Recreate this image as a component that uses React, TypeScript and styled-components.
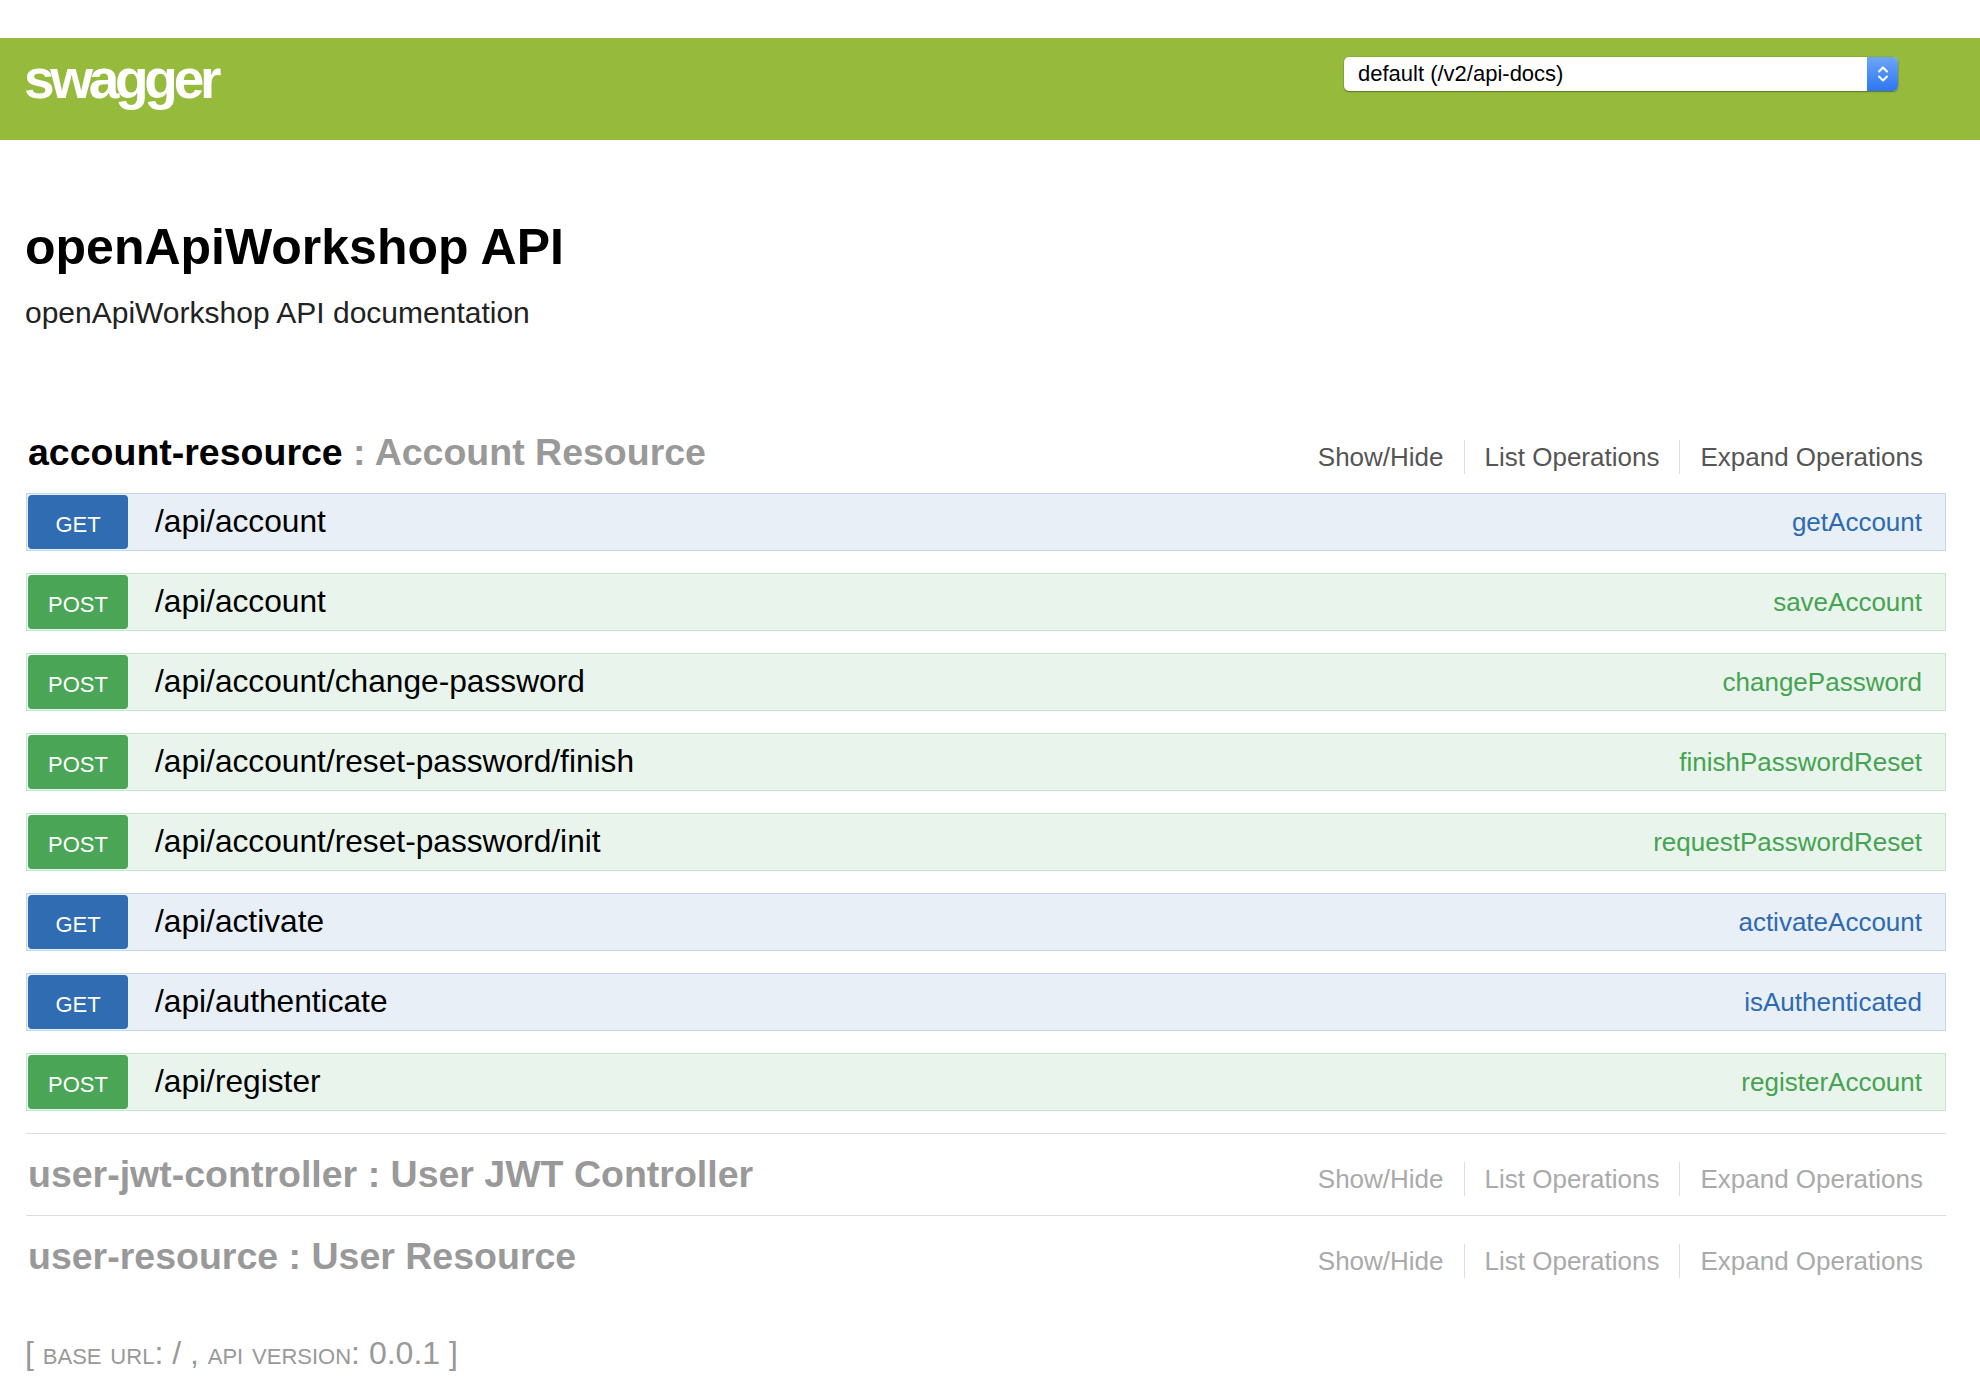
import React from 'react';
import styled, { createGlobalStyle, css } from 'styled-components';

type Method = 'get' | 'post';

type Operation = {
  method: Method;
  path: string;
  nickname: string;
};

type Resource = {
  name: string;
  description: string;
  active?: boolean;
  operations: Operation[];
};

const methodColors = {
  get: { badge: '#2f6cb1', bg: '#e8eff7', border: '#c4d7ea', text: '#2d6ab1' },
  post: { badge: '#4aa556', bg: '#e9f4ec', border: '#c7e6d1', text: '#45a351' },
};

const GlobalStyle = createGlobalStyle`
  html, body {
    margin: 0;
    padding: 0;
    background: #fff;
  }
  body {
    font-family: "Liberation Sans", Arial, Helvetica, sans-serif;
    color: #000;
  }
  ul {
    list-style: none;
    margin: 0;
    padding: 0;
  }
`;

const Page = styled.div`
  padding-top: 38px;
  padding-bottom: 30px;
`;

const Header = styled.header`
  display: flex;
  justify-content: space-between;
  align-items: flex-start;
  height: 102px;
  box-sizing: border-box;
  padding: 14px 82px 0 24px;
  background: #96bb3c;
`;

const Logo = styled.a`
  font-size: 55px;
  line-height: 1;
  font-weight: bold;
  letter-spacing: -4.3px;
  color: #fff;
  text-decoration: none;
`;

const ApiSelect = styled.div`
  display: flex;
  align-items: stretch;
  width: 554px;
  height: 34px;
  margin-top: 5px;
  background: #fff;
  border-radius: 5px;
  box-shadow: 0 1px 1.5px rgba(0, 0, 0, 0.35), 0 0 0 0.5px rgba(0, 0, 0, 0.12);
  overflow: hidden;
`;

const SelectText = styled.span`
  flex: 1;
  display: flex;
  align-items: center;
  padding-left: 14px;
  font-size: 22px;
  color: #000;
`;

const Stepper = styled.span`
  width: 31px;
  display: flex;
  align-items: center;
  justify-content: center;
  background: linear-gradient(#6ea5f6, #2d77f1);
`;

const Container = styled.main`
  padding: 0 34px 0 25px;
`;

const InfoTitle = styled.h1`
  margin: 82px 0 0;
  font-size: 50px;
  line-height: 1;
  font-weight: bold;
`;

const InfoDescription = styled.div`
  margin-top: 26px;
  font-size: 30px;
  line-height: 1;
  color: #222;
`;

const ResourceList = styled.ul`
  margin-top: 84px !important;
  padding-left: 1px !important;
`;

const ResourceItem = styled.li<{ $last?: boolean }>`
  border-bottom: ${(p) => (p.$last ? 'none' : '1px solid #ddd')};
`;

const ResourceHeading = styled.div`
  display: flex;
  justify-content: space-between;
  align-items: flex-end;
  padding: 22px 0;
`;

const ResourceName = styled.h2<{ $active?: boolean }>`
  margin: 0;
  padding-left: 2px;
  font-size: 37.5px;
  line-height: 37px;
  font-weight: bold;
  color: ${(p) => (p.$active ? '#000' : '#999')};
`;

const ResourceDesc = styled.span`
  color: #999;
`;

const Options = styled.ul`
  display: flex;
  margin-right: 23px !important;
`;

const OptionItem = styled.li`
  padding: 4px 20px 0;
  margin-bottom: -3px;
  border-right: 1px solid #ddd;

  &:first-child {
    padding-left: 0;
  }
  &:last-child {
    padding-right: 0;
    border-right: none;
  }
`;

const OptionLink = styled.a<{ $active?: boolean }>`
  display: block;
  padding-bottom: 4px;
  font-size: 26px;
  line-height: 1;
  text-decoration: none;
  color: ${(p) => (p.$active ? '#555' : '#aaa')};
`;

const OperationList = styled.ul``;

const OperationRow = styled.li<{ $method: Method }>`
  display: flex;
  align-items: center;
  height: 58px;
  box-sizing: border-box;
  margin-bottom: 22px;
  padding: 1px;
  ${(p) => css`
    background: ${methodColors[p.$method].bg};
    border: 1px solid ${methodColors[p.$method].border};
  `}
`;

const MethodBadge = styled.span<{ $method: Method }>`
  display: flex;
  align-items: center;
  justify-content: center;
  width: 100px;
  height: 54px;
  box-sizing: border-box;
  padding-top: 6px;
  border-radius: 4px;
  font-size: 22px;
  color: #fff;
  text-transform: uppercase;
  background: ${(p) => methodColors[p.$method].badge};
`;

const PathText = styled.span`
  flex: 1;
  padding-left: 27px;
  font-size: 31.7px;
  line-height: 1;
  color: #000;
`;

const OperationName = styled.span<{ $method: Method }>`
  padding-right: 22px;
  font-size: 26px;
  line-height: 1;
  color: ${(p) => methodColors[p.$method].text};
`;

const Footer = styled.h4`
  margin: 40px 0 0;
  font-size: 32px;
  line-height: 1;
  font-weight: normal;
  color: #999;
`;

const SmallCaps = styled.span`
  font-variant: small-caps;
`;

const resources: Resource[] = [
  {
    name: 'account-resource',
    description: 'Account Resource',
    active: true,
    operations: [
      { method: 'get', path: '/api/account', nickname: 'getAccount' },
      { method: 'post', path: '/api/account', nickname: 'saveAccount' },
      { method: 'post', path: '/api/account/change-password', nickname: 'changePassword' },
      { method: 'post', path: '/api/account/reset-password/finish', nickname: 'finishPasswordReset' },
      { method: 'post', path: '/api/account/reset-password/init', nickname: 'requestPasswordReset' },
      { method: 'get', path: '/api/activate', nickname: 'activateAccount' },
      { method: 'get', path: '/api/authenticate', nickname: 'isAuthenticated' },
      { method: 'post', path: '/api/register', nickname: 'registerAccount' },
    ],
  },
  { name: 'user-jwt-controller', description: 'User JWT Controller', operations: [] },
  { name: 'user-resource', description: 'User Resource', operations: [] },
];

const StepperIcon = () => (
  <svg width="14" height="22" viewBox="0 0 14 22" fill="none">
    <path d="M3 8.5 L7 4.5 L11 8.5" stroke="#fff" strokeWidth="2" strokeLinecap="round" strokeLinejoin="round" />
    <path d="M3 13.5 L7 17.5 L11 13.5" stroke="#fff" strokeWidth="2" strokeLinecap="round" strokeLinejoin="round" />
  </svg>
);

const App: React.FC = () => {
  return (
    <Page>
      <GlobalStyle />
      <Header>
        <Logo href="#">swagger</Logo>
        <ApiSelect>
          <SelectText>default (/v2/api-docs)</SelectText>
          <Stepper>
            <StepperIcon />
          </Stepper>
        </ApiSelect>
      </Header>
      <Container>
        <InfoTitle>openApiWorkshop API</InfoTitle>
        <InfoDescription>openApiWorkshop API documentation</InfoDescription>
        <ResourceList>
          {resources.map((res, index) => (
            <ResourceItem key={res.name} $last={index === resources.length - 1}>
              <ResourceHeading>
                <ResourceName $active={res.active}>
                  {res.name} <ResourceDesc>: {res.description}</ResourceDesc>
                </ResourceName>
                <Options>
                  <OptionItem>
                    <OptionLink href="#" $active={res.active}>Show/Hide</OptionLink>
                  </OptionItem>
                  <OptionItem>
                    <OptionLink href="#" $active={res.active}>List Operations</OptionLink>
                  </OptionItem>
                  <OptionItem>
                    <OptionLink href="#" $active={res.active}>Expand Operations</OptionLink>
                  </OptionItem>
                </Options>
              </ResourceHeading>
              {res.operations.length > 0 && (
                <OperationList>
                  {res.operations.map((op, i) => (
                    <OperationRow key={i} $method={op.method}>
                      <MethodBadge $method={op.method}>{op.method}</MethodBadge>
                      <PathText>{op.path}</PathText>
                      <OperationName $method={op.method}>{op.nickname}</OperationName>
                    </OperationRow>
                  ))}
                </OperationList>
              )}
            </ResourceItem>
          ))}
        </ResourceList>
        <Footer>
          [ <SmallCaps>base url</SmallCaps>: / , <SmallCaps>api version</SmallCaps>: 0.0.1 ]
        </Footer>
      </Container>
    </Page>
  );
};

export default App;
